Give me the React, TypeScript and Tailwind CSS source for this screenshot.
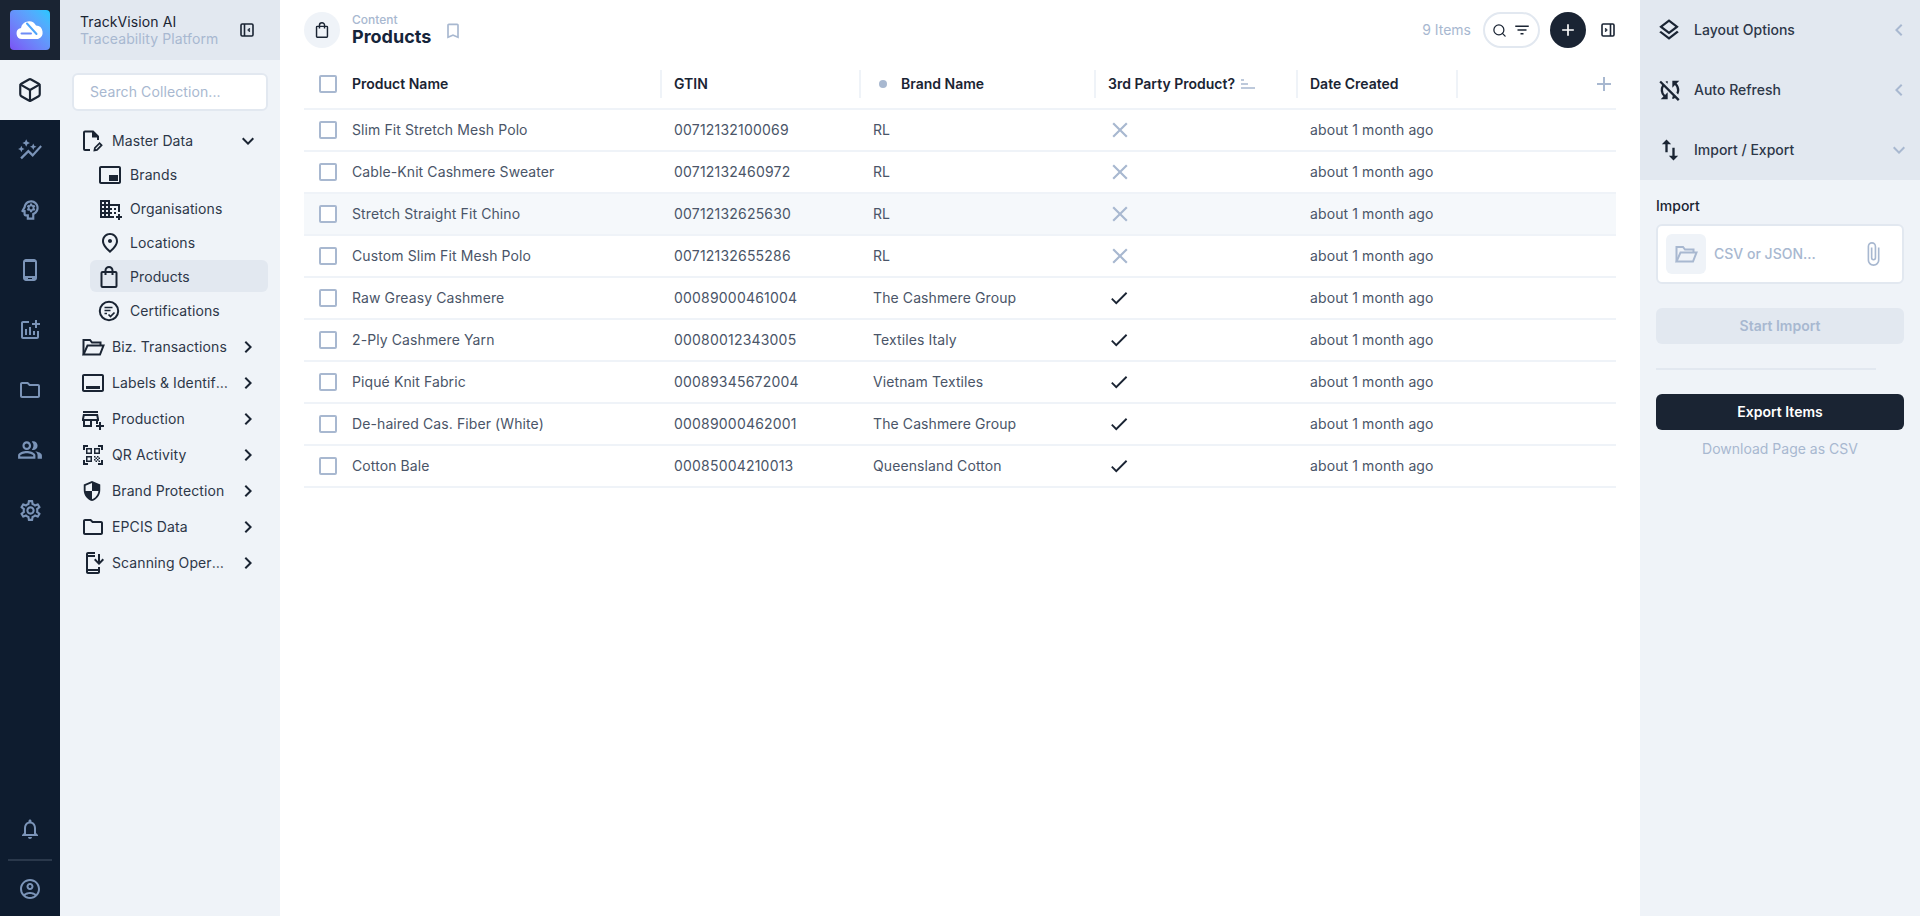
import type { ReactNode } from "react";
import { Box, Search } from "lucide-react";
import {
  MdAutoGraph,
  MdOutlinePsychology,
  MdOutlinePhoneAndroid,
  MdOutlineAddchart,
  MdOutlineFolder,
  MdOutlinePeopleAlt,
  MdOutlineSettings,
  MdOutlineNotifications,
  MdOutlineAccountCircle,
  MdOutlineBrandingWatermark,
  MdOutlineDomainAdd,
  MdOutlinePlace,
  MdOutlineCallToAction,
  MdOutlineAddBusiness,
  MdOutlineQrCodeScanner,
  MdSecurity,
  MdOutlineInstallMobile,
  MdOutlineLayers,
  MdOutlineSyncDisabled,
  MdOutlineImportExport,
  MdOutlineAttachFile,
  MdOutlineFilterList,
  MdOutlineBookmarkBorder,
  MdClose,
  MdCheck,
  MdAdd,
  MdKeyboardArrowDown,
  MdKeyboardArrowRight,
  MdKeyboardArrowLeft,
} from "react-icons/md";

const products = [
  { name: "Slim Fit Stretch Mesh Polo", gtin: "00712132100069", brand: "RL", third: false },
  { name: "Cable-Knit Cashmere Sweater", gtin: "00712132460972", brand: "RL", third: false },
  { name: "Stretch Straight Fit Chino", gtin: "00712132625630", brand: "RL", third: false },
  { name: "Custom Slim Fit Mesh Polo", gtin: "00712132655286", brand: "RL", third: false },
  { name: "Raw Greasy Cashmere", gtin: "00089000461004", brand: "The Cashmere Group", third: true },
  { name: "2-Ply Cashmere Yarn", gtin: "00080012343005", brand: "Textiles Italy", third: true },
  { name: "Piqué Knit Fabric", gtin: "00089345672004", brand: "Vietnam Textiles", third: true },
  { name: "De-haired Cas. Fiber (White)", gtin: "00089000462001", brand: "The Cashmere Group", third: true },
  { name: "Cotton Bale", gtin: "00085004210013", brand: "Queensland Cotton", third: true },
];

function Logo() {
  return (
    <div className="w-10 h-10 rounded-sm bg-gradient-to-tr from-[#7a52f4] to-[#1fc8ff] flex items-center justify-center">
      <svg width="30" height="20" viewBox="0 0 30 20" fill="none">
        <path
          d="M7 19a5.500 5.500 0 0 1-1-10.900A8 8 0 0 1 21 5.600 6.900 6.900 0 0 1 23 19Z"
          fill="#fff"
        />
        <path d="M6.500 13.500H16" stroke="#6f8cf6" strokeWidth="2" strokeLinecap="round" />
        <path d="M12 3.500 21.500 14" stroke="#4da5fa" strokeWidth="2" strokeLinecap="round" />
      </svg>
    </div>
  );
}

function PanelIcon({ flip }: { flip?: boolean }) {
  return (
    <svg width="14" height="14" viewBox="0 0 14 14" fill="none" className={flip ? "rotate-180" : ""}>
      <rect x="1" y="1" width="12" height="12" rx="1.200" stroke="#1a2433" strokeWidth="1.600" />
      <path d="M4.500 1v12" stroke="#1a2433" strokeWidth="1.600" />
      <path d="M9.600 5 7.600 7l2 2Z" fill="#1a2433" stroke="#1a2433" strokeWidth="0.600" />
    </svg>
  );
}

function DocEditIcon() {
  return (
    <svg width="22" height="22" viewBox="0 0 22 22" fill="none" stroke="#1a2433" strokeWidth="2">
      <path d="M9 20H4a1 1 0 0 1-1-1V2.500a1 1 0 0 1 1-1h8l5 5v3.500" />
      <path d="M12 1.500v5h5" fill="#1a2433" />
      <path d="m13.400 20.400.5-2.600 4.700-4.600 2 2-4.600 4.700Z" strokeWidth="1.700" />
    </svg>
  );
}

function CertIcon() {
  return (
    <svg width="22" height="22" viewBox="0 0 22 22" fill="none" stroke="#1a2433" strokeWidth="2">
      <circle cx="11" cy="11" r="9.200" />
      <path d="M6.500 7.500h8M6.500 10.500h6M6.500 13.500h2.500" strokeWidth="1.700" />
      <path d="m10.500 14.500 2 2 4-4" strokeWidth="1.700" />
    </svg>
  );
}

function BagIcon({ size }: { size: number }) {
  return (
    <svg width={size} height={size} viewBox="0 0 22 22" fill="none" stroke="currentColor" strokeWidth="2">
      <rect x="3.500" y="6" width="15" height="15" rx="1" />
      <path d="M7.500 9V4.500a3.500 3.500 0 0 1 7 0V9" />
    </svg>
  );
}

function OpenFolderIcon({ size }: { size: number }) {
  return (
    <svg width={size} height={size} viewBox="0 0 24 24" fill="none" stroke="currentColor" strokeWidth="2">
      <path d="M2.500 19.500V5h6.500l2 2.500h8.500V11" />
      <path d="M2.500 19.500h16.500l3.500-9H6.500Z" />
    </svg>
  );
}

function SortIcon() {
  return (
    <svg width="14" height="10" viewBox="0 0 14 10" fill="none" stroke="#a8b8d0" strokeWidth="1.300">
      <path d="M0 1h3M0 5h7M0 9h14" />
    </svg>
  );
}

function RailIcon({ children, active }: { children: ReactNode; active?: boolean }) {
  return (
    <div
      className={
        active
          ? "h-[60px] flex items-center justify-center bg-[#eff3f8] text-[#1a2433]"
          : "h-[60px] flex items-center justify-center text-[#7b94b8]"
      }
    >
      {children}
    </div>
  );
}

function NavGroup({ icon, label, open }: { icon: ReactNode; label: string; open?: boolean }) {
  return (
    <div className="h-9 flex items-center pl-[21px] pr-[20px]">
      <div className="w-[31px] flex items-center text-[#1a2433]">{icon}</div>
      <span className="flex-1 min-w-0 mr-[7px] truncate text-sm tracking-[0.1px] text-[#2d3748]">{label}</span>
      {open ? (
        <MdKeyboardArrowDown size={24} className="text-[#1a2433]" />
      ) : (
        <MdKeyboardArrowRight size={24} className="text-[#1a2433]" />
      )}
    </div>
  );
}

function NavItem({ icon, label, active }: { icon: ReactNode; label: string; active?: boolean }) {
  return (
    <div
      className={
        active
          ? "h-8 mb-0.5 pt-0.5 ml-[30px] mr-3 pl-2 flex items-center rounded-md bg-[#e2e8f0]"
          : "h-8 mb-0.5 pt-0.5 ml-[30px] mr-3 pl-2 flex items-center rounded-md"
      }
    >
      <div className="w-[32px] flex items-center text-[#1a2433]">{icon}</div>
      <span className="text-sm tracking-[0.1px] text-[#2d3748]">{label}</span>
    </div>
  );
}

function Checkbox() {
  return <div className="w-[18px] h-[18px] rounded-[2px] border-2 border-[#a8b8d0] bg-white" />;
}

function HeadCell({ children, className }: { children: ReactNode; className?: string }) {
  return (
    <div className={`h-7 flex items-center border-l-2 border-[#eff3f8] text-sm font-semibold text-[#1a2433] ${className ?? ""}`}>
      {children}
    </div>
  );
}

function ProductTable() {
  return (
    <div className="mx-6">
      <div className="h-[50px] grid grid-cols-[356px_199px_235px_202px_160px_1fr] items-center border-b-2 border-[#eff3f8]">
        <div className="flex items-center pl-[15px] gap-[15px] text-sm font-semibold text-[#1a2433]">
          <Checkbox />
          Product Name
        </div>
        <HeadCell className="pl-3">GTIN</HeadCell>
        <HeadCell className="pl-[18px] gap-[14px]">
          <span className="w-2 h-2 rounded-full bg-[#a8b8d0]" />
          Brand Name
        </HeadCell>
        <HeadCell className="pl-3 gap-1.5">
          3rd Party Product?
          <SortIcon />
        </HeadCell>
        <HeadCell className="pl-3">Date Created</HeadCell>
        <HeadCell className="justify-end">
          <MdAdd size={24} className="text-[#a8b8d0]" />
        </HeadCell>
      </div>
      {products.map((p, i) => (
        <div
          key={p.gtin}
          className={
            i === 2
              ? "h-[42px] grid grid-cols-[356px_199px_235px_202px_160px_1fr] items-center border-b-2 border-[#eff3f8] bg-[#f5f8fb] text-sm tracking-[0.1px] text-[#4a5568]"
              : "h-[42px] grid grid-cols-[356px_199px_235px_202px_160px_1fr] items-center border-b-2 border-[#eff3f8] text-sm tracking-[0.1px] text-[#4a5568]"
          }
        >
          <div className="flex items-center pl-[15px] gap-[15px]">
            <Checkbox />
            {p.name}
          </div>
          <div className="pl-[14px] tracking-[0.2px]">{p.gtin}</div>
          <div className="pl-[14px]">{p.brand}</div>
          <div className="pl-[13px]">
            {p.third ? (
              <MdCheck size={22} className="ml-px text-[#1a2433]" />
            ) : (
              <MdClose size={26} className="text-[#a8b8d0]" />
            )}
          </div>
          <div className="pl-[14px]">about 1 month ago</div>
          <div />
        </div>
      ))}
    </div>
  );
}

function PanelRow({ icon, label, open }: { icon: ReactNode; label: string; open?: boolean }) {
  return (
    <div className="h-[60px] flex items-center pl-[16px] pr-[9px]">
      <div className="w-[38px] flex items-center text-[#1a2433]">{icon}</div>
      <span className="flex-1 text-sm font-medium text-[#2d3748]">{label}</span>
      {open ? (
        <MdKeyboardArrowDown size={24} className="text-[#a8b8d0]" />
      ) : (
        <MdKeyboardArrowLeft size={24} className="text-[#a8b8d0]" />
      )}
    </div>
  );
}

export default function App() {
  return (
    <div className="w-[1920px] h-[916px] flex overflow-hidden bg-white font-['Inter',sans-serif]">
      {/* icon rail */}
      <aside className="w-[60px] flex flex-col bg-[#0e1c2f]">
        <div className="h-[60px] flex items-center justify-center bg-[#1a2433]">
          <Logo />
        </div>
        <RailIcon active>
          <Box size={26} strokeWidth={2} />
        </RailIcon>
        <RailIcon>
          <MdAutoGraph size={26} />
        </RailIcon>
        <RailIcon>
          <MdOutlinePsychology size={26} />
        </RailIcon>
        <RailIcon>
          <MdOutlinePhoneAndroid size={24} />
        </RailIcon>
        <RailIcon>
          <MdOutlineAddchart size={24} />
        </RailIcon>
        <RailIcon>
          <MdOutlineFolder size={24} />
        </RailIcon>
        <RailIcon>
          <MdOutlinePeopleAlt size={26} />
        </RailIcon>
        <RailIcon>
          <MdOutlineSettings size={25} />
        </RailIcon>
        <div className="mt-auto h-[60px] flex items-center justify-center text-[#7b94b8]">
          <MdOutlineNotifications size={24} />
        </div>
        <div className="mx-2 h-0.5 bg-[#2a384b]" />
        <div className="h-[55px] flex items-center justify-center text-[#7b94b8]">
          <MdOutlineAccountCircle size={24} />
        </div>
      </aside>

      {/* collection sidebar */}
      <aside className="w-[220px] flex flex-col bg-[#eff3f8]">
        <div className="h-[60px] flex items-center pl-5 pr-[26px] bg-[#e2e8f0]">
          <div className="flex-1 text-sm tracking-[0.1px] leading-[17px]">
            <div className="text-[#1a2433]">TrackVision AI</div>
            <div className="text-[#a8b8d0]">Traceability Platform</div>
          </div>
          <PanelIcon />
        </div>
        <div className="mx-3 mt-[13px] h-[38px] flex items-center px-4 rounded-md border-2 border-[#e2e8f0] bg-white text-sm tracking-[0.1px] text-[#a8b8d0]">
          Search Collection...
        </div>
        <div className="mt-3">
          <NavGroup icon={<DocEditIcon />} label="Master Data" open />
          <div className="-mt-px pb-px">
            <NavItem icon={<MdOutlineBrandingWatermark size={24} />} label="Brands" />
            <NavItem icon={<MdOutlineDomainAdd size={24} />} label="Organisations" />
            <NavItem icon={<MdOutlinePlace size={24} />} label="Locations" />
            <NavItem icon={<BagIcon size={22} />} label="Products" active />
            <NavItem icon={<CertIcon />} label="Certifications" />
          </div>
          <NavGroup icon={<OpenFolderIcon size={24} />} label="Biz. Transactions" />
          <NavGroup icon={<MdOutlineCallToAction size={24} />} label="Labels & Identifiers" />
          <NavGroup icon={<MdOutlineAddBusiness size={24} />} label="Production" />
          <NavGroup icon={<MdOutlineQrCodeScanner size={24} />} label="QR Activity" />
          <NavGroup icon={<MdSecurity size={22} />} label="Brand Protection" />
          <NavGroup icon={<MdOutlineFolder size={24} />} label="EPCIS Data" />
          <NavGroup icon={<MdOutlineInstallMobile size={24} />} label="Scanning Operations" />
        </div>
      </aside>

      {/* main content */}
      <main className="flex-1 min-w-0 flex flex-col">
        <header className="h-[60px] pt-3 flex items-start pl-6 pr-[25px]">
          <div className="w-9 h-9 rounded-full bg-[#eff3f8] flex items-center justify-center text-[#1a2433]">
            <BagIcon size={16} />
          </div>
          <div className="ml-3">
            <div className="text-xs font-medium leading-4 text-[#a8b8d0]">Content</div>
            <div className="text-lg font-bold leading-[18px] text-[#15243a]">Products</div>
          </div>
          <MdOutlineBookmarkBorder size={20} className="ml-3 mt-[9px] text-[#a8b8d0]" />
          <div className="ml-auto h-9 flex items-center">
            <span className="text-sm text-[#a8b8d0]">9 Items</span>
            <div className="ml-3 w-[57px] h-9 flex items-center justify-center gap-1.5 rounded-full border-2 border-[#e2e8f0] text-[#1a2433]">
              <Search size={15} strokeWidth={2} />
              <MdOutlineFilterList size={18} />
            </div>
            <div className="ml-[10px] w-9 h-9 rounded-full bg-[#1a2433] flex items-center justify-center text-white">
              <MdAdd size={20} />
            </div>
            <div className="ml-[15px]">
              <PanelIcon flip />
            </div>
          </div>
        </header>
        <ProductTable />
      </main>

      {/* options panel */}
      <aside className="w-[280px] flex flex-col bg-[#eff3f8]">
        <div className="bg-[#e2e8f0]">
          <PanelRow icon={<MdOutlineLayers size={26} />} label="Layout Options" />
          <PanelRow icon={<MdOutlineSyncDisabled size={28} />} label="Auto Refresh" />
          <PanelRow icon={<MdOutlineImportExport size={28} />} label="Import / Export" open />
        </div>
        <div className="px-4 pt-[17px]">
          <div className="text-sm font-medium leading-[18px] text-[#1a2433]">Import</div>
          <div className="mt-[9px] h-[60px] flex items-center pl-2 pr-[16px] rounded-md border-2 border-[#e2e8f0] bg-white">
            <div className="w-10 h-10 rounded-md bg-[#eff3f8] flex items-center justify-center text-[#a8b8d0]">
              <OpenFolderIcon size={24} />
            </div>
            <span className="ml-2 flex-1 text-sm font-medium text-[#a8b8d0]">CSV or JSON...</span>
            <MdOutlineAttachFile size={26} className="text-[#a8b8d0]" />
          </div>
          <div className="mt-6 h-9 flex items-center justify-center rounded-md bg-[#e2e8f0] text-sm font-semibold text-[#a8b8d0]">
            Start Import
          </div>
          <div className="mt-6 w-[220px] h-0.5 bg-[#e2e8f0]" />
          <div className="mt-6 h-9 flex items-center justify-center rounded-md bg-[#1a2433] text-sm font-semibold text-white">
            Export Items
          </div>
          <div className="mt-[10px] text-center text-sm leading-[18px] text-[#a8b8d0]">Download Page as CSV</div>
        </div>
      </aside>
    </div>
  );
}
